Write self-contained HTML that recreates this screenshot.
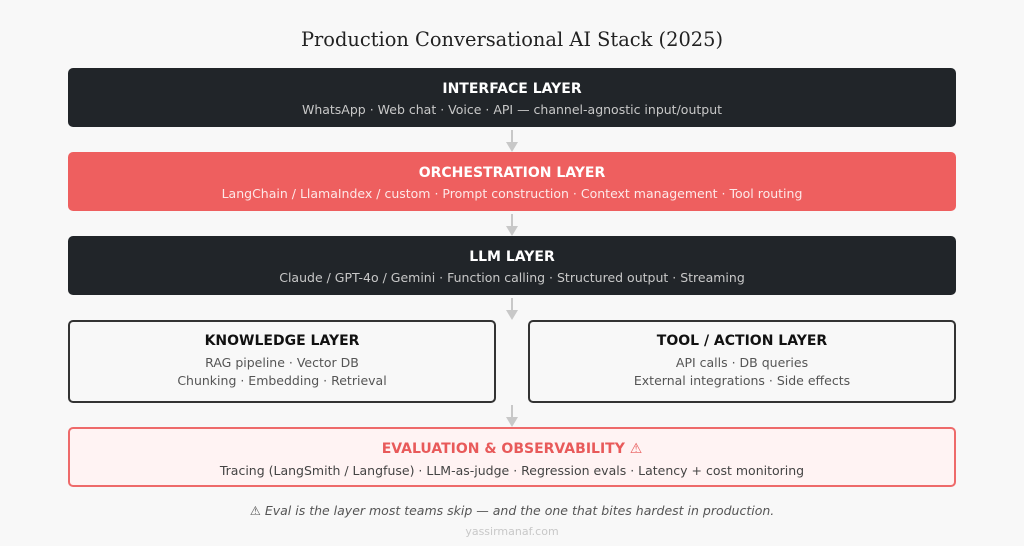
<!DOCTYPE html>
<html><head><meta charset="utf-8"><style>
body{margin:0;width:1024px;height:546px;background:#f8f8f8;font-family:"DejaVu Sans","Liberation Sans",sans-serif;position:relative;overflow:hidden}
.t{position:absolute;left:0;width:1024px;text-align:center;top:28px;font-family:"DejaVu Serif","Liberation Serif",serif;font-size:19.4px;color:#222}
.b{position:absolute;box-sizing:border-box;border-radius:5px;text-align:center}
.h{font-weight:bold;font-size:14px;position:absolute;left:0;right:0}
.s{font-size:12.5px;position:absolute;left:0;right:0}
.dark{background:#212529;color:#fff}
.dark .s{color:#c8c8c8}
.red{background:#ee5f5f;color:#fff}
.red .s{color:#fde8e8}
.out{border:2px solid #333;background:#f8f8f8;color:#111}
.out .s{color:#555}
.ev{border:2px solid #ee6a6a;background:#fff3f3}
.ev .h{color:#e85a5a}
.ev .s{color:#444}
.ar{position:absolute;left:511px;width:2px;background:#c8c8c8}
.ah{position:absolute;left:506px;width:0;height:0;border-left:6px solid transparent;border-right:6px solid transparent;border-top:10px solid #c8c8c8}
</style></head><body>
<div class="t">Production Conversational AI Stack (2025)</div>

<div class="b dark" style="left:68px;top:68px;width:888px;height:59px"><div class="h" style="top:13px">INTERFACE LAYER</div><div class="s" style="top:34px">WhatsApp · Web chat · Voice · API — channel-agnostic input/output</div></div>
<div class="ar" style="top:130px;height:12px"></div><div class="ah" style="top:142px"></div>

<div class="b red" style="left:68px;top:152px;width:888px;height:59px"><div class="h" style="top:13px">ORCHESTRATION LAYER</div><div class="s" style="top:34px">LangChain / LlamaIndex / custom · Prompt construction · Context management · Tool routing</div></div>
<div class="ar" style="top:214px;height:12px"></div><div class="ah" style="top:226px"></div>

<div class="b dark" style="left:68px;top:236px;width:888px;height:59px"><div class="h" style="top:13px">LLM LAYER</div><div class="s" style="top:34px">Claude / GPT-4o / Gemini · Function calling · Structured output · Streaming</div></div>
<div class="ar" style="top:298px;height:12px"></div><div class="ah" style="top:310px"></div>

<div class="b out" style="left:68px;top:320px;width:428px;height:83px"><div class="h" style="top:11px">KNOWLEDGE LAYER</div><div class="s" style="top:33px">RAG pipeline · Vector DB</div><div class="s" style="top:51px">Chunking · Embedding · Retrieval</div></div>
<div class="b out" style="left:528px;top:320px;width:428px;height:83px"><div class="h" style="top:11px">TOOL / ACTION LAYER</div><div class="s" style="top:33px">API calls · DB queries</div><div class="s" style="top:51px">External integrations · Side effects</div></div>
<div class="ar" style="top:405px;height:12px"></div><div class="ah" style="top:417px"></div>

<div class="b ev" style="left:68px;top:427px;width:888px;height:60px"><div class="h" style="top:12px">EVALUATION &amp; OBSERVABILITY ⚠</div><div class="s" style="top:34px">Tracing (LangSmith / Langfuse) · LLM-as-judge · Regression evals · Latency + cost monitoring</div></div>

<div style="position:absolute;left:0;width:1024px;top:503px;text-align:center;font-size:12.5px;font-style:italic;color:#555">⚠ Eval is the layer most teams skip — and the one that bites hardest in production.</div>
<div style="position:absolute;left:0;width:1024px;top:525px;text-align:center;font-size:11px;color:#c8c8c8">yassirmanaf.com</div>
</body></html>
